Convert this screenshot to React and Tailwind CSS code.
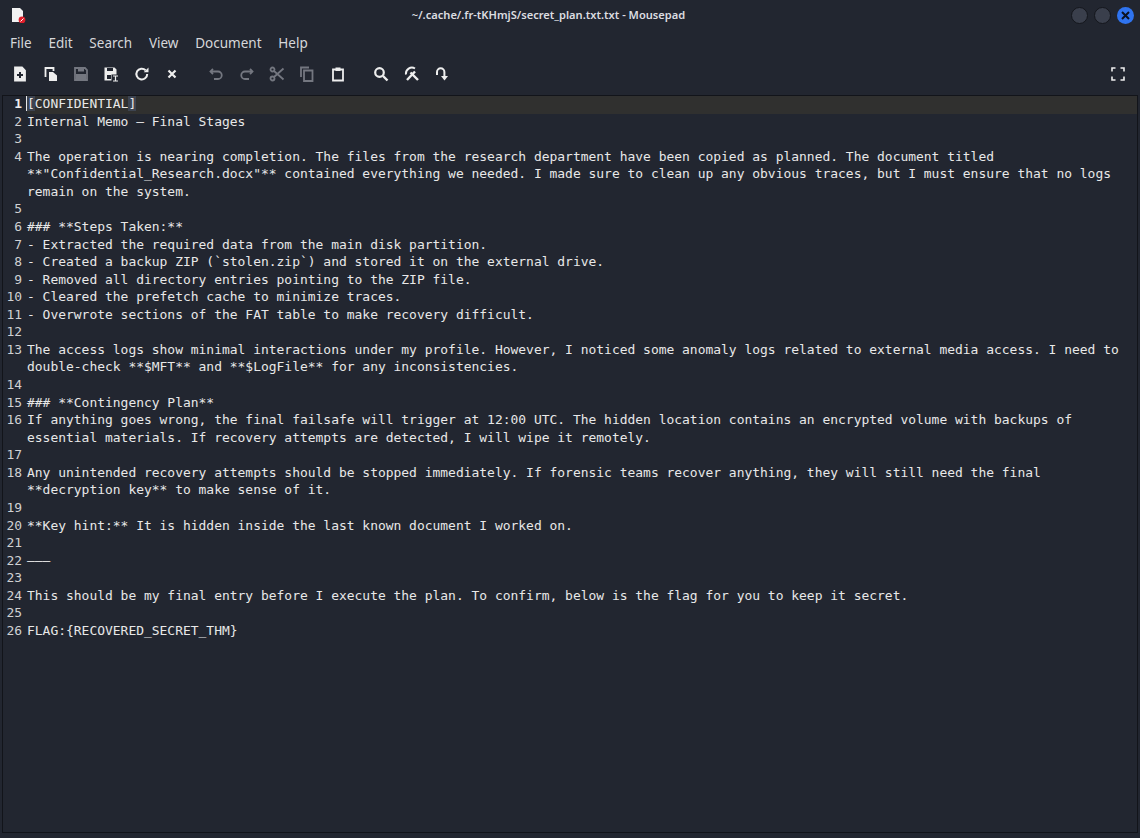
const lines = [
  '[CONFIDENTIAL]',
  'Internal Memo – Final Stages',
  '',
  'The operation is nearing completion. The files from the research department have been copied as planned. The document titled **"Confidential_Research.docx"** contained everything we needed. I made sure to clean up any obvious traces, but I must ensure that no logs remain on the system.',
  '',
  '### **Steps Taken:**',
  '- Extracted the required data from the main disk partition.',
  '- Created a backup ZIP (`stolen.zip`) and stored it on the external drive.',
  '- Removed all directory entries pointing to the ZIP file.',
  '- Cleared the prefetch cache to minimize traces.',
  '- Overwrote sections of the FAT table to make recovery difficult.',
  '',
  'The access logs show minimal interactions under my profile. However, I noticed some anomaly logs related to external media access. I need to double-check **$MFT** and **$LogFile** for any inconsistencies.',
  '',
  '### **Contingency Plan**',
  'If anything goes wrong, the final failsafe will trigger at 12:00 UTC. The hidden location contains an encrypted volume with backups of essential materials. If recovery attempts are detected, I will wipe it remotely.',
  '',
  'Any unintended recovery attempts should be stopped immediately. If forensic teams recover anything, they will still need the final **decryption key** to make sense of it.',
  '',
  '**Key hint:** It is hidden inside the last known document I worked on.',
  '',
  '———',
  '',
  'This should be my final entry before I execute the plan. To confirm, below is the flag for you to keep it secret.',
  '',
  'FLAG:{RECOVERED_SECRET_THM}',
];

const menus = ['File', 'Edit', 'Search', 'View', 'Document', 'Help'];

function ToolIcon({ children, dim }) {
  return (
    <button className={`w-[30.35px] h-8 flex items-center justify-center ${dim ? 'text-[#747780]' : 'text-[#eeeeee]'}`}>
      <svg width="16" height="16" viewBox="0 0 16 16" fill="none" stroke="currentColor" strokeWidth="1.8">
        {children}
      </svg>
    </button>
  );
}

export default function App() {
  return (
    <div className="w-[1140px] h-[838px] bg-[#222630] text-[#e6e6e6] overflow-hidden flex flex-col font-['Noto_Sans',sans-serif]">
      {/* Title bar */}
      <div className="h-[30px] shrink-0 flex items-center relative px-2">
        <svg width="16" height="16" viewBox="0 0 16 16" className="ml-0.5">
          <path d="M2 1h8l3 3v11H2z" fill="#f2f2f2" />
          <circle cx="12" cy="13" r="3.4" fill="#e0202c" />
          <path d="M10.5 14.5l3-3" stroke="#fff" strokeWidth="1" />
        </svg>
        <div className="flex-1 text-center text-[11.1px] font-semibold text-[#dcdde0]">
          ~/.cache/.fr-tKHmjS/secret_plan.txt.txt - Mousepad
        </div>
        <div className="flex items-center gap-[6px] mr-[-2px]">
          <span className="w-[17px] h-[17px] rounded-full bg-[#3a3f4c] border border-[#14161c]" />
          <span className="w-[17px] h-[17px] rounded-full bg-[#3a3f4c] border border-[#14161c]" />
          <span className="w-[17px] h-[17px] rounded-full bg-[#2f74f0] flex items-center justify-center">
            <svg width="9" height="9" viewBox="0 0 9 9" stroke="#0c1220" strokeWidth="2">
              <path d="M1 1l7 7M8 1l-7 7" />
            </svg>
          </span>
        </div>
      </div>

      {/* Menu bar */}
      <div className="h-[25px] pt-[2px] shrink-0 flex items-center gap-[16.8px] pl-[10px] text-[13.5px] text-[#d6d7da]">
        {menus.map((m) => (
          <span key={m}>{m}</span>
        ))}
      </div>

      {/* Toolbar */}
      <div className="h-[36px] mt-px shrink-0 flex items-center pl-[5px] pr-[7px]">
        <ToolIcon>
          <path d="M3 1.5h7l3 3v10H3z" fill="currentColor" />
          <path d="M8 6v6M5 9h6" stroke="#222630" strokeWidth="2" />
        </ToolIcon>
        <ToolIcon>
          <path d="M2.5 11V2h8v3" />
          <path d="M6 6h4l4 3.5V15H6z" fill="currentColor" stroke="none" />
        </ToolIcon>
        <ToolIcon dim>
          <path d="M2 2h10l2 2v10H2z" />
          <path d="M5 2.5h6v3H5z" fill="currentColor" stroke="none" />
          <path d="M3 8h10v6H3z" fill="currentColor" stroke="none" />
        </ToolIcon>
        <ToolIcon>
          <path d="M1.5 1.5h10l2 2v5h-5v6h-7z" fill="currentColor" stroke="none" />
          <path d="M4 2h6v3H4z" fill="#222630" stroke="none" />
          <path d="M4 9h4v4H4z" fill="#222630" stroke="none" />
          <path d="M10 10h5M12.5 10v5M10 15h5" strokeWidth="1.2" />
        </ToolIcon>
        <ToolIcon>
          <path d="M13.2 8a5.4 5.4 0 1 1-1.6-3.8" strokeWidth="2" />
          <path d="M14.5 1.5v4.8H9.7z" fill="currentColor" stroke="none" />
        </ToolIcon>
        <ToolIcon>
          <path d="M4.5 4.5l7 7M11.5 4.5l-7 7" strokeWidth="2.2" />
        </ToolIcon>
        <div className="w-[14px]" />
        <ToolIcon dim>
          <path d="M5 3L2.5 5.5 5 8" />
          <path d="M3 5.5h7a3.5 3.5 0 0 1 0 7.5H6" />
        </ToolIcon>
        <ToolIcon dim>
          <path d="M11 3l2.5 2.5L11 8" />
          <path d="M13 5.5H6a3.5 3.5 0 0 0 0 7.5h4" />
        </ToolIcon>
        <ToolIcon dim>
          <circle cx="3.5" cy="3.5" r="2" />
          <circle cx="3.5" cy="12.5" r="2" />
          <path d="M5 5l9.5 8.5M5 11L14.5 2.5" />
        </ToolIcon>
        <ToolIcon dim>
          <path d="M2 11V1.5h8" />
          <path d="M5 4.5h8.5v10.5H5z" />
        </ToolIcon>
        <ToolIcon>
          <path d="M3 3.5h10v11H3z" />
          <path d="M5.5 1.5h5v3.5h-5z" fill="currentColor" stroke="none" />
        </ToolIcon>
        <div className="w-[13.5px]" />
        <ToolIcon>
          <circle cx="6.5" cy="6.5" r="4.3" strokeWidth="2.2" />
          <path d="M10 10l4.5 4.5" strokeWidth="2.4" />
        </ToolIcon>
        <ToolIcon>
          <path d="M2 8.5a6 6 0 0 1 9-6" strokeWidth="2" />
          <path d="M3 14L11 5.5" strokeWidth="2.4" />
          <path d="M6.5 6.5L14 14" strokeWidth="2.4" />
        </ToolIcon>
        <ToolIcon>
          <path d="M3 9V6a3.7 3.7 0 0 1 7.4 0v5" strokeWidth="2" />
          <path d="M7 10h7l-3.5 4.5z" fill="currentColor" stroke="none" />
        </ToolIcon>
        <div className="flex-1" />
        <ToolIcon>
          <path d="M2 5.5V2h3.5M10.5 2H14v3.5M14 10.5V14h-3.5M5.5 14H2v-3.5" strokeWidth="1.6" />
        </ToolIcon>
      </div>

      {/* Editor */}
      <div className="mx-[2px] mt-[3px] h-[738px] border border-[#12141a] text-[#e8e8e8] text-[12.96px] leading-[17.56px] font-['DejaVu_Sans_Mono',monospace]">
        {lines.map((text, i) => (
          <div key={i} className={`flex ${i === 0 ? 'bg-[linear-gradient(to_right,transparent_24px,#30302f_24px)]' : ''}`}>
            <div className={`w-[24px] shrink-0 text-right pr-[5px] -translate-y-px text-[#d0d1d3] ${i === 0 ? 'font-bold text-[#eeeeee]' : ''}`}>
              {i + 1}
            </div>
            <div className="flex-1 min-w-0 pr-[12px] whitespace-pre-wrap break-words min-h-[17.56px] -translate-y-px">
              {i === 0 ? (
                <>
                  <span className="bg-[#3d4451] border-l border-[#e8e8e8] ml-[-1px]">[</span>
                  CONFIDENTIAL
                  <span className="bg-[#3d4451]">]</span>
                </>
              ) : (
                text
              )}
            </div>
          </div>
        ))}
      </div>
    </div>
  );
}
